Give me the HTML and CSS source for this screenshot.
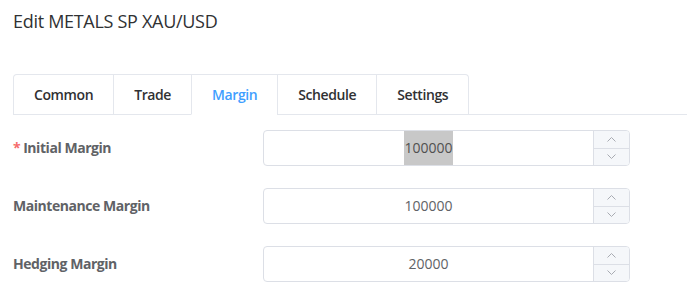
FILE: index.html
```html
<!DOCTYPE html>
<html lang="en">
<head>
    <meta charset="UTF-8">
    <meta name="viewport" content="width=device-width, initial-scale=1.0">
    <title>Edit Symbol</title>
    <link rel="stylesheet" href="styles.css">
</head>
<body>
    <h1 class="page-title">Edit METALS SP XAU/USD</h1>

    <div class="tabs-header">
        <div class="tabs-nav">
            <div class="tab-item">Common</div>
            <div class="tab-item">Trade</div>
            <div class="tab-item is-active">Margin</div>
            <div class="tab-item">Schedule</div>
            <div class="tab-item">Settings</div>
        </div>
    </div>

    <form class="margin-form" onsubmit="event.preventDefault();">
        <div class="form-item">
            <label class="form-label is-required">Initial Margin</label>
            <div class="input-number">
                <div class="input-inner"><span class="selected">100000</span></div>
                <div class="spin">
                    <span class="spin-btn spin-up">
                        <svg width="9" height="5" viewBox="0 0 9 5"><polyline points="0.5,4.5 4.5,0.5 8.5,4.5" fill="none" stroke="#a8abb2" stroke-width="1"/></svg>
                    </span>
                    <span class="spin-btn spin-down">
                        <svg width="9" height="5" viewBox="0 0 9 5"><polyline points="0.5,0.5 4.5,4.5 8.5,0.5" fill="none" stroke="#a8abb2" stroke-width="1"/></svg>
                    </span>
                </div>
            </div>
        </div>
        <div class="form-item">
            <label class="form-label">Maintenance Margin</label>
            <div class="input-number">
                <div class="input-inner"><span>100000</span></div>
                <div class="spin">
                    <span class="spin-btn spin-up">
                        <svg width="9" height="5" viewBox="0 0 9 5"><polyline points="0.5,4.5 4.5,0.5 8.5,4.5" fill="none" stroke="#a8abb2" stroke-width="1"/></svg>
                    </span>
                    <span class="spin-btn spin-down">
                        <svg width="9" height="5" viewBox="0 0 9 5"><polyline points="0.5,0.5 4.5,4.5 8.5,0.5" fill="none" stroke="#a8abb2" stroke-width="1"/></svg>
                    </span>
                </div>
            </div>
        </div>
        <div class="form-item">
            <label class="form-label">Hedging Margin</label>
            <div class="input-number">
                <div class="input-inner"><span>20000</span></div>
                <div class="spin">
                    <span class="spin-btn spin-up">
                        <svg width="9" height="5" viewBox="0 0 9 5"><polyline points="0.5,4.5 4.5,0.5 8.5,4.5" fill="none" stroke="#a8abb2" stroke-width="1"/></svg>
                    </span>
                    <span class="spin-btn spin-down">
                        <svg width="9" height="5" viewBox="0 0 9 5"><polyline points="0.5,0.5 4.5,4.5 8.5,0.5" fill="none" stroke="#a8abb2" stroke-width="1"/></svg>
                    </span>
                </div>
            </div>
        </div>
    </form>
</body>
</html>
```

FILE: styles.css
```css
body {
    font-family: "Open Sans", "Noto Sans", Arial, sans-serif;
    color: #303133;
    margin: 0;
    padding: 0 0 0 13px;
    background-color: #fff;
}

.page-title {
    font-size: 18px;
    font-weight: 400;
    line-height: 24px;
    letter-spacing: -0.3px;
    margin: 9px 0 0;
    color: #303133;
}

.tabs-header {
    margin-top: 41px;
    border-bottom: 1px solid #e4e7ed;
    margin-bottom: 15px;
}

.tabs-nav {
    display: inline-flex;
    border: 1px solid #e4e7ed;
    border-bottom: none;
    border-radius: 4px 4px 0 0;
    margin-bottom: -1px;
}

.tab-item {
    height: 39px;
    line-height: 39px;
    padding: 0 20px;
    font-size: 14px;
    font-weight: 600;
    letter-spacing: -0.4px;
    color: #303133;
    border-left: 1px solid #e4e7ed;
    border-bottom: 1px solid transparent;
}

    .tab-item:first-child {
        border-left: none;
    }

    .tab-item.is-active {
        color: #409eff;
        border-bottom-color: #fff;
    }

.form-item {
    display: flex;
    align-items: center;
    margin-bottom: 22px;
}

.form-label {
    width: 250px;
    font-size: 14px;
    font-weight: 700;
    letter-spacing: -0.45px;
    color: #606266;
    line-height: 36px;
}

    .form-label.is-required::before {
        content: "*";
        color: #f56c6c;
        margin-right: 3px;
    }

.input-number {
    display: flex;
    width: 367px;
    height: 36px;
    box-sizing: border-box;
    border: 1px solid #dcdfe6;
    border-radius: 4px;
    overflow: hidden;
}

.input-inner {
    flex: 1;
    text-align: center;
    font-size: 14px;
    color: #606266;
    line-height: 34px;
}

    .input-inner .selected {
        display: inline-block;
        background-color: #c8c8c8;
        color: #505050;
    }

.spin {
    width: 35px;
    display: flex;
    flex-direction: column;
    border-left: 1px solid #dcdfe6;
    background-color: #f5f7fa;
}

.spin-btn {
    flex: 1;
    display: flex;
    align-items: center;
    justify-content: center;
}

.spin-up {
    border-bottom: 1px solid #dcdfe6;
}
```
